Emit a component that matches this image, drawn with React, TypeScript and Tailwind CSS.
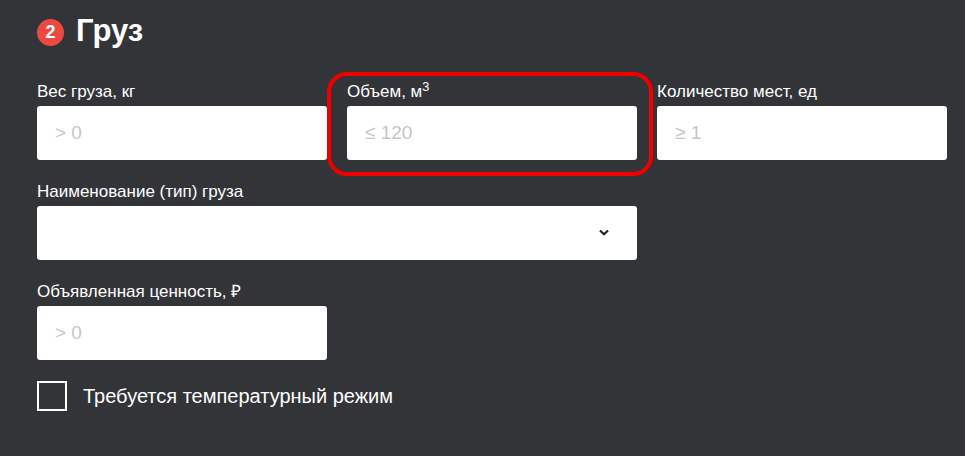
import { useState } from 'react';

const inputCls =
  'w-full h-[54px] rounded-[3px] bg-white px-[18px] text-[19px] text-[#333] placeholder-[#c6c6c6] outline-none';
const labelCls = 'block h-5 mb-1 text-[17px] leading-5 text-white';

function Field({ label, placeholder }: { label: React.ReactNode; placeholder: string }) {
  return (
    <div>
      <label className={labelCls}>{label}</label>
      <input className={inputCls} placeholder={placeholder} />
    </div>
  );
}

export default function App() {
  const [checked, setChecked] = useState(false);

  return (
    <div
      className="min-h-screen w-[965px] h-[456px] bg-[#333438] pt-4 pl-[37px] overflow-hidden"
      style={{ fontFamily: '"Liberation Sans", Arial, sans-serif' }}
    >
      {/* Heading */}
      <div className="flex items-center gap-[12px] h-[30px]">
        <span className="w-[27px] h-[27px] mt-[3px] rounded-full bg-[#ec4a40] text-white text-[18px] font-bold flex items-center justify-center">
          2
        </span>
        <h2 className="text-[31px] leading-[30px] font-bold text-white">Груз</h2>
      </div>

      <div className="mt-9 grid grid-cols-[290px_290px_290px] gap-x-5 gap-y-[22px]">
        <Field label="Вес груза, кг" placeholder="> 0" />

        <div className="relative">
          {/* highlight ring */}
          <div className="absolute -top-[10px] -left-5 -right-4 -bottom-4 rounded-[20px] border-4 border-[#ee0000] pointer-events-none" />
          <Field
            label={
              <>
                Объем, м<sup>3</sup>
              </>
            }
            placeholder="≤ 120"
          />
        </div>

        <Field label="Количество мест, ед" placeholder="≥ 1" />

        <div className="col-span-2">
          <label className={labelCls}>Наименование (тип) груза</label>
          <div className="relative">
            <select className={`${inputCls} appearance-none`} defaultValue="">
              <option value="" />
            </select>
            <svg
              className="absolute right-[28px] top-[23px] w-[10px] h-[7px] pointer-events-none"
              viewBox="0 0 10 7"
              fill="none"
              stroke="#222"
              strokeWidth={2.2}
            >
              <path d="M1 1.5 5 5.2 9 1.5" />
            </svg>
          </div>
        </div>
        <div />

        <Field label="Объявленная ценность, ₽" placeholder="> 0" />
      </div>

      {/* Checkbox */}
      <label className="mt-[21px] flex items-center gap-4 cursor-pointer w-fit">
        <span
          onClick={() => setChecked(!checked)}
          className="w-[30px] h-[30px] border-2 border-white flex items-center justify-center"
        >
          {checked && <span className="w-4 h-4 bg-white" />}
        </span>
        <span className="text-[20px] text-white">Требуется температурный режим</span>
      </label>
    </div>
  );
}
